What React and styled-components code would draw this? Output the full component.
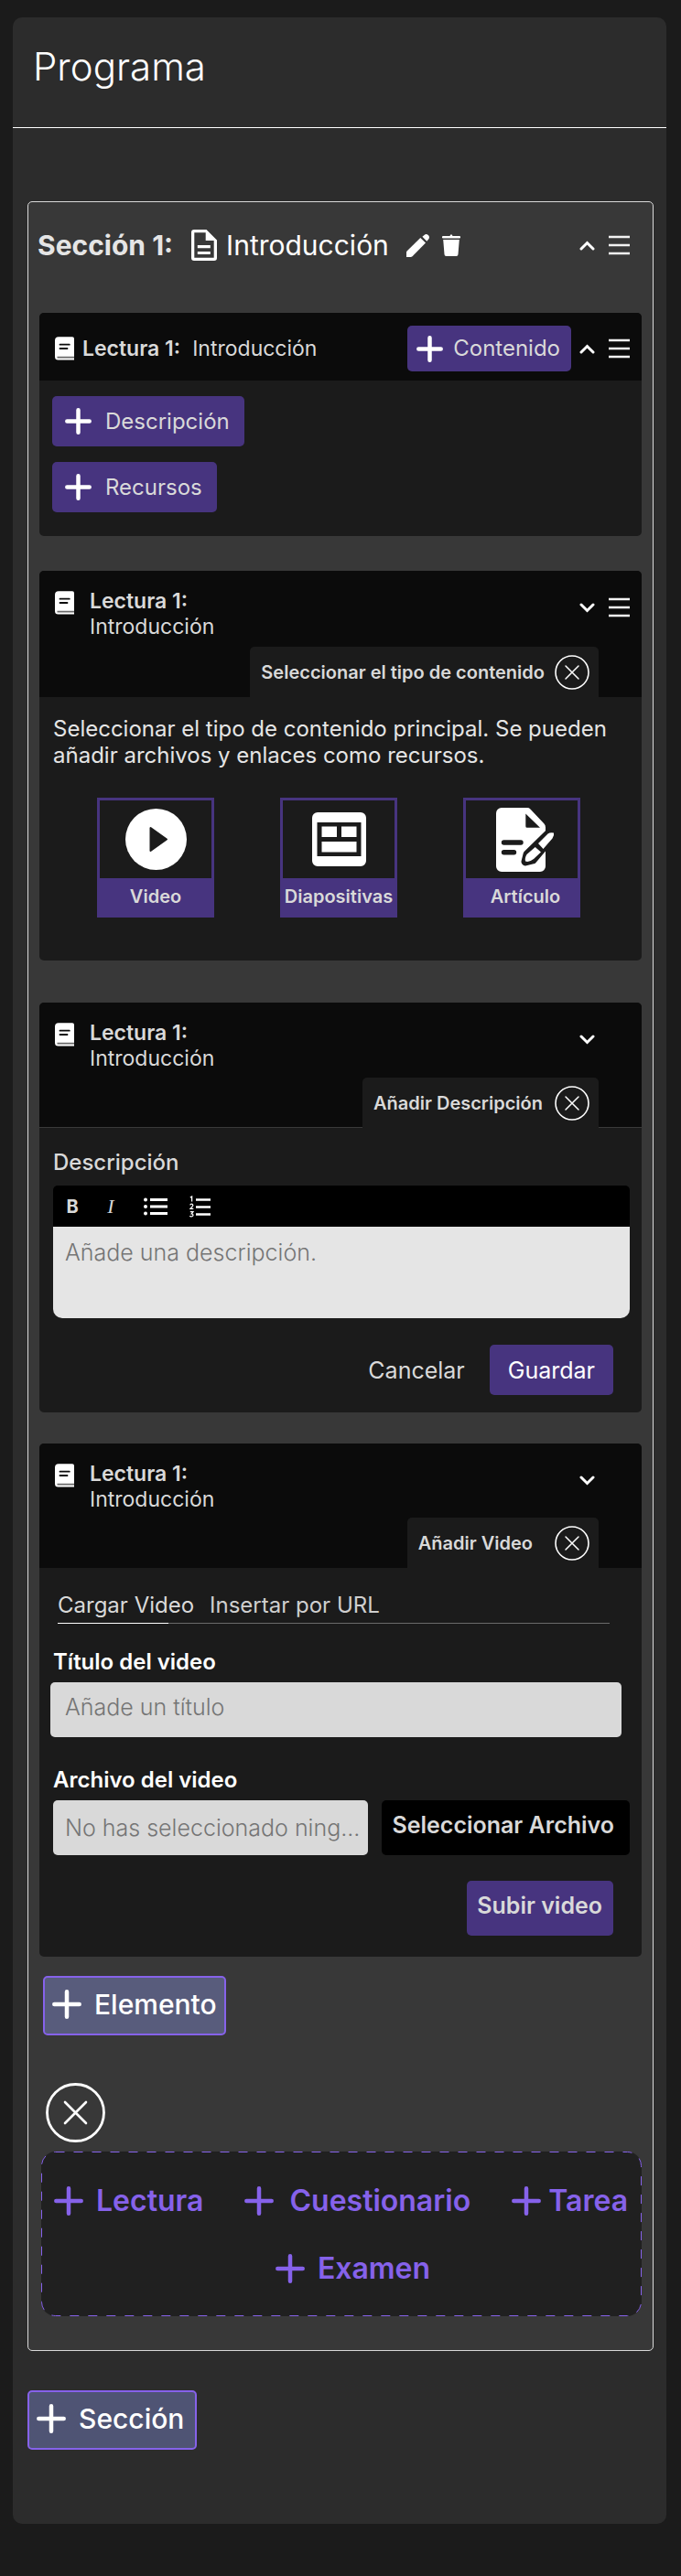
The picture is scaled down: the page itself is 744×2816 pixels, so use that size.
import React from "react";
import styled, { createGlobalStyle } from "styled-components";

const color = {
  page: "#1b1b1b",
  panel: "#2c2c2c",
  section: "#383838",
  header: "#0b0b0b",
  card: "#1b1b1b",
  text: "#d9d9d9",
  purple: "#47347f",
  violet: "#8662ea",
  placeholder: "#757575",
};

const GlobalStyle = createGlobalStyle`
  *, *::before, *::after { box-sizing: border-box; }
  body {
    margin: 0;
    background: ${color.page};
    color: ${color.text};
    font-family: Inter, "Liberation Sans", sans-serif;
    font-size: 24px;
    line-height: 28px;
  }
  h1, h2, h3, p { margin: 0; }
  button, input, textarea { font: inherit; color: inherit; border: 0; margin: 0; }
  button { background: none; padding: 0; cursor: pointer; }
  svg { display: block; flex: none; }
`;

/* ---------- icons ---------- */

const Svg = ({ w, h, children, ...rest }) => (
  <svg width={w} height={h} viewBox={`0 0 ${w} ${h}`} fill="none" aria-hidden="true" {...rest}>
    {children}
  </svg>
);

const PlusIcon = ({ size = 29 }) => (
  <Svg w={size} h={size} stroke="currentColor" strokeWidth="4.5" strokeLinecap="round">
    <path d={`M${size / 2} 2.3V${size - 2.3}M2.3 ${size / 2}H${size - 2.3}`} />
  </Svg>
);

const ChevronIcon = ({ up }) => (
  <Svg w={17} h={11} stroke="#fff" strokeWidth="3" strokeLinecap="round" strokeLinejoin="miter">
    <path d={up ? "M2 9L8.5 2.5L15 9" : "M2 2L8.5 8.5L15 2"} />
  </Svg>
);

const MenuIcon = () => (
  <Svg w={23} h={22} stroke="#f2f2f2" strokeWidth="2.5">
    <path d="M0 2H23M0 11H23M0 20H23" />
  </Svg>
);

const DocumentIcon = () => (
  <Svg w={28} h={34} fill="#fff">
    <path
      fillRule="evenodd"
      d="M3 0H16.5L28 11.5V31A3 3 0 0 1 25 34H3A3 3 0 0 1 0 31V3A3 3 0 0 1 3 0ZM3.3 3.3V30.7H24.7V11.9H15.7V3.3Z"
    />
    <path d="M6.8 17H20.8V20.2H6.8ZM6.8 24H20.8V27H6.8Z" />
  </Svg>
);

const PencilIcon = () => (
  <Svg w={25} h={25} fill="#fff">
    <path d="M0 25V20Q0 19 .8 18.2L15.3 4L21 9.6L6.5 24.2Q5.700 25 4.700 25Z" />
    <path d="M17.400 2.800L19.500 .9A3.200 3.200 0 0 1 23.800 1.100A3.200 3.200 0 0 1 24.200 5.400L22.300 7.700Z" />
  </Svg>
);

const TrashIcon = () => (
  <Svg w={20} h={24} fill="#fff">
    <path d="M1 2H8.500Q9 .3 10 .3T11.500 2H19A1 1 0 0 1 19 4.500H1A1 1 0 0 1 1 2Z" />
    <path d="M1.200 6H18.800L17.500 22A2 2 0 0 1 15.500 24H4.500A2 2 0 0 1 2.500 22Z" />
  </Svg>
);

const BookIcon = () => (
  <Svg w={21} h={26}>
    <path fill="#fff" d="M4 .3H19A2 2 0 0 1 21 2.300V25.500H3.500A3.500 3.500 0 0 1 0 22V4.300A4 4 0 0 1 4 .3Z" />
    <path stroke={color.header} strokeWidth="1.800" strokeLinecap="round" d="M5.500 8.700H15.800M5.500 13H13.500" />
    <path stroke="#6a6a6a" strokeWidth="1.800" d="M2.500 22.600H21" />
  </Svg>
);

const PlayIcon = () => (
  <Svg w={67} h={67}>
    <circle cx="33.500" cy="33.500" r="33.500" fill="#fff" />
    <path fill={color.card} stroke={color.card} strokeWidth="2" strokeLinejoin="round" d="M27.500 21V46L45 33.500Z" />
  </Svg>
);

const SlidesIcon = () => (
  <Svg w={59} h={59} fill="#fff">
    <path
      fillRule="evenodd"
      d="M6 0H53A6 6 0 0 1 59 6V53A6 6 0 0 1 53 59H6A6 6 0 0 1 0 53V6A6 6 0 0 1 6 0ZM5.500 11V48H53.500V11Z"
    />
    <path d="M10.500 15.500H27V27H10.500ZM32 15.500H48.500V27H32ZM10.500 32H48.500V43.500H10.500Z" />
  </Svg>
);

const ArticleIcon = () => (
  <Svg w={64} h={70}>
    <path
      fill="#fff"
      fillRule="evenodd"
      d="M6 0H34Q36 0 37.400 1.400L52.500 17.500Q54 19 54 21.500V64A6 6 0 0 1 48 70H6A6 6 0 0 1 0 64V6A6 6 0 0 1 6 0ZM32.300 6.500V20.200Q32.300 21.700 33.800 21.700H48Z"
    />
    <path stroke={color.card} strokeWidth="5.400" strokeLinecap="round" d="M8.500 38H27M8.500 48.700H19.500" />
    <g fill={color.card} stroke={color.card} strokeWidth="9" strokeLinejoin="round">
      <path d="M34 51L57 28.500L61 32L40 57L32 59Z" />
    </g>
    <path
      fill="#fff"
      d="M46 39L56.500 28.500Q59 26.700 63 27.500Q63.800 30 61.500 33.500L51.500 45ZM42.700 43L49 48.500L41 56Q36 60 32 58.500Q31 55 33.500 51Z"
    />
  </Svg>
);

const BulletListIcon = () => (
  <Svg w={26} h={20} fill="#fff">
    <circle cx="2" cy="2.500" r="2" />
    <circle cx="2" cy="10" r="2" />
    <circle cx="2" cy="17.500" r="2" />
    <path d="M7 1H26V4H7ZM7 8.500H26V11.500H7ZM7 16H26V19H7Z" />
  </Svg>
);

const NumberListIcon = () => (
  <Svg w={23} h={24}>
    <path stroke="#fff" strokeWidth="2.500" d="M7 4.500H23M7 12.500H23M7 20.500H23" />
    <path
      stroke="#fff"
      strokeWidth="1.300"
      d="M.8 2L2.600 1V6.500M.8 10.400Q1 9.200 2.300 9.200T3.800 10.500Q3.800 11.300 .9 14.400H4.300M.8 17.700H3.900L2.300 19.800Q4 19.800 4 21.300T2.300 22.900T.7 22"
    />
  </Svg>
);

const CloseIcon = ({ large }) =>
  large ? (
    <Svg w={65} h={65} stroke="#fff" strokeLinecap="round">
      <circle cx="32.500" cy="32.500" r="31" strokeWidth="2.800" />
      <path strokeWidth="2.600" d="M21 21L44 44M44 21L21 44" />
    </Svg>
  ) : (
    <Svg w={38} h={38} stroke="#fff" strokeLinecap="round">
      <circle cx="19" cy="19" r="18" strokeWidth="1.600" />
      <path strokeWidth="1.500" d="M12 12L26 26M26 12L12 26" />
    </Svg>
  );

/* ---------- layout ---------- */

const Page = styled.main`
  min-height: 100vh;
  padding: 19px 16px 57px 14px;
`;

const Panel = styled.div`
  background: ${color.panel};
  border-radius: 10px;
`;

const PanelHeader = styled.header`
  padding: 29px 22px 41px;
  border-bottom: 1px solid #fff;
  h1 {
    font-size: 42px;
    line-height: 50px;
    font-weight: 300;
    color: #fff;
  }
`;

const PanelBody = styled.div`
  padding: 80px 14px 81px 16px;
`;

const Section = styled.section`
  display: flex;
  flex-direction: column;
  padding: 29px 12px 37px;
  margin-bottom: 43px;
  background: ${color.section};
  border: 1px solid ${color.text};
  border-radius: 5px;
`;

const SectionHeader = styled.header`
  display: flex;
  align-items: center;
  padding-right: 13px;
  margin: 0 0 56px -2px;
  font-size: 30px;
  line-height: 36px;
`;

const SectionLabel = styled.h2`
  margin-right: 20px;
  font-size: 30px;
  font-weight: 700;
  color: #e5e5e5;
`;

const SectionName = styled.span`
  margin: 0 19px 0 10px;
  font-weight: 400;
  color: #fff;
`;

const IconButton = styled.button`
  flex: none;
  margin-left: ${(p) => p.$gap || 0}px;
`;

const Controls = styled.div`
  display: flex;
  align-items: center;
  gap: 15px;
  margin-left: auto;
  padding-right: ${(p) => (p.$noMenu ? 38 : 0)}px;
`;

const Card = styled.article`
  margin-bottom: ${(p) => p.$gap}px;
  background: ${color.card};
  border-radius: 5px;
  overflow: hidden;
`;

const InlineHeader = styled.header`
  display: flex;
  align-items: center;
  gap: 9px;
  padding: 14px 13px 10px 17px;
  background: ${color.header};
`;

const StackedHeader = styled.header`
  display: flex;
  flex-direction: column;
  justify-content: space-between;
  min-height: ${(p) => p.$height}px;
  padding-top: 19px;
  background: ${color.header};
  border-bottom: ${(p) => (p.$ruled ? "1px solid #3a3a3a" : "0")};
`;

const HeaderRow = styled.div`
  display: flex;
  align-items: flex-start;
  gap: 17px;
  padding: 0 13px 0 17px;
  > svg { margin-top: 3px; }
  ${Controls} { height: 42px; }
`;

const LectureTitle = styled.h3`
  font-size: 23px;
  font-weight: 600;
  line-height: 28px;
  span {
    display: ${(p) => (p.$inline ? "inline" : "block")};
    margin-left: ${(p) => (p.$inline ? 13 : 0)}px;
    font-weight: 400;
  }
`;

const CardTab = styled.div`
  display: flex;
  align-items: center;
  align-self: flex-end;
  gap: ${(p) => p.$gap}px;
  height: 55px;
  margin: 0 47px ${(p) => (p.$ruled ? -1 : 0)}px 0;
  padding: 0 10px 0 12px;
  background: ${color.card};
  border-radius: 5px 5px 0 0;
  font-size: 20px;
  font-weight: 600;
`;

const CardBody = styled.div`
  display: flex;
  flex-direction: column;
  padding: ${(p) => p.$top}px 13px ${(p) => p.$bottom}px 15px;
`;

const ButtonStack = styled.div`
  display: flex;
  flex-direction: column;
  align-items: flex-start;
  gap: 17px;
  margin-left: -1px;
`;

const PrimaryButton = styled.button`
  display: flex;
  align-items: center;
  gap: ${(p) => p.$gap || 15}px;
  height: ${(p) => p.$height || 55}px;
  padding: ${(p) => p.$padding || "0 16px 0 14px"};
  background: ${(p) => (p.$dark ? "#000" : color.purple)};
  border-radius: 5px;
  color: ${(p) => (p.$bright ? "#fff" : color.text)};
  font-size: ${(p) => (p.$large ? 25 : 24)}px;
  font-weight: ${(p) => p.$weight || 400};
  white-space: nowrap;
  svg { color: #fff; }
`;

const TextButton = styled.button`
  font-size: 25px;
`;

const Prompt = styled.p`
  line-height: 29px;
  font-weight: 400;
  color: #e5e5e5;
`;

const TypeRow = styled.div`
  display: flex;
  justify-content: space-between;
  margin: 32px 54px 0 48px;
`;

const TypeButton = styled.button`
  display: flex;
  flex-direction: column;
  width: 128px;
  border: 3px solid ${color.purple};
  background: ${color.card};
  font-size: 20px;
  font-weight: 600;
  white-space: nowrap;
`;

const TypePicture = styled.span`
  display: flex;
  align-items: center;
  justify-content: center;
  align-self: stretch;
  height: 85px;
  padding-left: ${(p) => p.$shift || 0}px;
`;

const TypeName = styled.span`
  align-self: stretch;
  padding-left: ${(p) => p.$shift || 0}px;
  line-height: 40px;
  background: ${color.purple};
`;

const FieldLabel = styled.label`
  margin-bottom: ${(p) => p.$gap || 8}px;
  font-weight: ${(p) => (p.$strong ? 600 : 500)};
  color: ${(p) => (p.$strong ? "#fff" : color.text)};
`;

const EditorToolbar = styled.div`
  display: flex;
  align-items: center;
  height: 45px;
  padding: 0 14px;
  background: #000;
  border-radius: 5px 5px 0 0;
  font-size: 20px;
`;

const BoldButton = styled.button`
  width: 14px;
  font-weight: 700;
`;

const ItalicButton = styled.button`
  width: 10px;
  margin: 0 31px 0 30px;
  font-family: "Liberation Serif", serif;
  font-style: italic;
  font-size: 22px;
`;

const EditorText = styled.textarea`
  display: block;
  height: 100px;
  padding: 14px 13px;
  background: #e5e5e5;
  border-radius: 0 0 10px 10px;
  color: #1b1b1b;
  font-size: 25px;
  font-weight: 300;
  resize: none;
  &::placeholder { color: ${color.placeholder}; opacity: 1; }
`;

const Actions = styled.div`
  display: flex;
  justify-content: flex-end;
  align-items: center;
  gap: 27px;
  margin-top: ${(p) => p.$top}px;
  padding-right: 18px;
`;

const TabList = styled.div`
  position: relative;
  display: flex;
  gap: 17px;
  margin: 0 22px 28px 5px;
  padding-bottom: 5px;
  border-bottom: 1px solid #6b6b6b;
  &::after {
    content: "";
    position: absolute;
    left: 0;
    bottom: -1px;
    width: 121px;
    height: 1px;
    background: #fff;
  }
`;

const TabButton = styled.button`
  font-weight: 400;
  color: ${(p) => (p.$active ? color.text : "#cfcfcf")};
`;

const TextField = styled.input`
  flex: ${(p) => (p.$grow ? 1 : "none")};
  min-width: 0;
  height: 60px;
  margin: ${(p) => p.$margin || 0};
  padding: ${(p) => p.$padding};
  background: ${color.text};
  border-radius: 5px;
  color: #1b1b1b;
  font-size: 25px;
  font-weight: 300;
  text-overflow: ellipsis;
  &::placeholder { color: ${color.placeholder}; opacity: 1; }
`;

const FileRow = styled.div`
  display: flex;
  gap: 15px;
`;

const AddButton = styled.button`
  display: flex;
  align-items: center;
  align-self: flex-start;
  gap: 14px;
  height: 65px;
  margin-left: ${(p) => p.$indent || 0}px;
  padding: 0 ${(p) => p.$right}px 3px 8px;
  background: ${(p) => (p.$light ? "#585c7c" : "#4f5474")};
  border: 2px solid ${color.violet};
  border-radius: 5px;
  color: #fff;
  font-size: 30px;
  font-weight: 500;
`;

const CloseMenu = styled.button`
  align-self: flex-start;
  margin: 52px 0 10px 7px;
`;

const ElementMenu = styled.div`
  position: relative;
  display: flex;
  flex-direction: column;
  gap: 34px;
  margin-left: 2px;
  padding: 34px 15px 32px 14px;
  background: #202020;
  border-radius: 16px;
`;

const DashedOutline = styled.svg`
  position: absolute;
  inset: 0;
  width: 100%;
  height: 100%;
  overflow: visible;
  pointer-events: none;
  rect {
    x: 0.5px;
    y: 0.5px;
    width: calc(100% - 1px);
    height: calc(100% - 1px);
  }
`;

const MenuRow = styled.div`
  display: flex;
  justify-content: ${(p) => (p.$center ? "center" : "space-between")};
  padding-left: ${(p) => (p.$center ? 26 : 0)}px;
`;

const MenuItem = styled.button`
  display: flex;
  align-items: center;
  gap: ${(p) => p.$gap || 14}px;
  color: ${color.violet};
  font-size: 32px;
  font-weight: 600;
  line-height: 40px;
`;

/* ---------- parts ---------- */

const CardControls = ({ up, menu, children }) => (
  <Controls $noMenu={!menu}>
    {children}
    <IconButton type="button" aria-label={up ? "Contraer" : "Expandir"}>
      <ChevronIcon up={up} />
    </IconButton>
    {menu && (
      <IconButton type="button" aria-label="Mover">
        <MenuIcon />
      </IconButton>
    )}
  </Controls>
);

const LectureHeader = ({ tab, tabGap, height = 136, ruled, menu }) => (
  <StackedHeader $height={height} $ruled={ruled}>
    <HeaderRow>
      <BookIcon />
      <LectureTitle>
        Lectura 1:<span>Introducción</span>
      </LectureTitle>
      <CardControls menu={menu} />
    </HeaderRow>
    <CardTab $gap={tabGap} $ruled={ruled}>
      {tab}
      <IconButton type="button" aria-label="Cerrar">
        <CloseIcon />
      </IconButton>
    </CardTab>
  </StackedHeader>
);

export default function App() {
  return (
    <>
      <GlobalStyle />
      <Page>
        <Panel>
          <PanelHeader>
            <h1>Programa</h1>
          </PanelHeader>
          <PanelBody>
            <Section>
              <SectionHeader>
                <SectionLabel>Sección 1:</SectionLabel>
                <DocumentIcon />
                <SectionName>Introducción</SectionName>
                <IconButton type="button" aria-label="Editar">
                  <PencilIcon />
                </IconButton>
                <IconButton type="button" aria-label="Eliminar" $gap={14}>
                  <TrashIcon />
                </IconButton>
                <CardControls up menu />
              </SectionHeader>

              <Card $gap={38}>
                <InlineHeader>
                  <BookIcon />
                  <LectureTitle $inline>
                    Lectura 1:<span>Introducción</span>
                  </LectureTitle>
                  <Controls>
                    <PrimaryButton type="button" $height={50} $gap={11} $padding="0 12px 0 10px">
                      <PlusIcon />
                      Contenido
                    </PrimaryButton>
                  </Controls>
                  <div>
                    <CardControls up menu />
                  </div>
                </InlineHeader>
                <CardBody $top={17} $bottom={26}>
                  <ButtonStack>
                    <PrimaryButton type="button">
                      <PlusIcon />
                      Descripción
                    </PrimaryButton>
                    <PrimaryButton type="button">
                      <PlusIcon />
                      Recursos
                    </PrimaryButton>
                  </ButtonStack>
                </CardBody>
              </Card>

              <Card $gap={46}>
                <LectureHeader tab="Seleccionar el tipo de contenido" tabGap={11} height={138} menu />
                <CardBody $top={20} $bottom={47}>
                  <Prompt>
                    Seleccionar el tipo de contenido principal. Se pueden añadir archivos y enlaces como recursos.
                  </Prompt>
                  <TypeRow>
                    <TypeButton type="button">
                      <TypePicture>
                        <PlayIcon />
                      </TypePicture>
                      <TypeName>Video</TypeName>
                    </TypeButton>
                    <TypeButton type="button">
                      <TypePicture>
                        <SlidesIcon />
                      </TypePicture>
                      <TypeName>Diapositivas</TypeName>
                    </TypeButton>
                    <TypeButton type="button">
                      <TypePicture $shift={8}>
                        <ArticleIcon />
                      </TypePicture>
                      <TypeName $shift={8}>Artículo</TypeName>
                    </TypeButton>
                  </TypeRow>
                </CardBody>
              </Card>

              <Card $gap={34}>
                <LectureHeader tab="Añadir Descripción" tabGap={13} height={137} ruled />
                <CardBody $top={24} $bottom={19}>
                  <FieldLabel htmlFor="descripcion" $gap={11}>
                    Descripción
                  </FieldLabel>
                  <EditorToolbar>
                    <BoldButton type="button">B</BoldButton>
                    <ItalicButton type="button">I</ItalicButton>
                    <IconButton type="button" aria-label="Lista">
                      <BulletListIcon />
                    </IconButton>
                    <IconButton type="button" aria-label="Lista numerada" $gap={24}>
                      <NumberListIcon />
                    </IconButton>
                  </EditorToolbar>
                  <EditorText id="descripcion" placeholder="Añade una descripción." />
                  <Actions $top={29}>
                    <TextButton type="button">Cancelar</TextButton>
                    <PrimaryButton type="button" $bright $large $padding="0 20px">
                      Guardar
                    </PrimaryButton>
                  </Actions>
                </CardBody>
              </Card>

              <Card $gap={21}>
                <LectureHeader tab="Añadir Video" tabGap={24} />
                <CardBody $top={27} $bottom={23}>
                  <TabList role="tablist">
                    <TabButton type="button" role="tab" aria-selected="true" $active>
                      Cargar Video
                    </TabButton>
                    <TabButton type="button" role="tab" aria-selected="false">
                      Insertar por URL
                    </TabButton>
                  </TabList>
                  <FieldLabel htmlFor="titulo" $strong>
                    Título del video
                  </FieldLabel>
                  <TextField
                    id="titulo"
                    type="text"
                    placeholder="Añade un título"
                    $margin="0 9px 33px -3px"
                    $padding="0 16px 7px"
                  />
                  <FieldLabel htmlFor="archivo" $strong>
                    Archivo del video
                  </FieldLabel>
                  <FileRow>
                    <TextField
                      id="archivo"
                      type="text"
                      readOnly
                      placeholder="No has seleccionado ning..."
                      $grow
                      $padding="0 8px 0 13px"
                    />
                    <PrimaryButton type="button" $dark $large $height={60} $padding="0 17px 6px 11px" $weight={600}>
                      Seleccionar Archivo
                    </PrimaryButton>
                  </FileRow>
                  <Actions $top={28}>
                    <PrimaryButton type="button" $large $height={60} $padding="0 12px 6px 11px" $weight={600}>
                      Subir video
                    </PrimaryButton>
                  </Actions>
                </CardBody>
              </Card>

              <AddButton type="button" $light $indent={4} $right={8}>
                <PlusIcon size={32} />
                Elemento
              </AddButton>

              <CloseMenu type="button" aria-label="Cerrar">
                <CloseIcon large />
              </CloseMenu>

              <ElementMenu>
                <DashedOutline aria-hidden="true">
                  <rect rx="15" fill="none" stroke={color.violet} strokeDasharray="10 10" />
                </DashedOutline>
                <MenuRow>
                  <MenuItem type="button">
                    <PlusIcon size={32} />
                    Lectura
                  </MenuItem>
                  <MenuItem type="button" $gap={17}>
                    <PlusIcon size={32} />
                    Cuestionario
                  </MenuItem>
                  <MenuItem type="button" $gap={8}>
                    <PlusIcon size={32} />
                    Tarea
                  </MenuItem>
                </MenuRow>
                <MenuRow $center>
                  <MenuItem type="button">
                    <PlusIcon size={32} />
                    Examen
                  </MenuItem>
                </MenuRow>
              </ElementMenu>
            </Section>

            <AddButton type="button" $right={12}>
              <PlusIcon size={32} />
              Sección
            </AddButton>
          </PanelBody>
        </Panel>
      </Page>
    </>
  );
}
